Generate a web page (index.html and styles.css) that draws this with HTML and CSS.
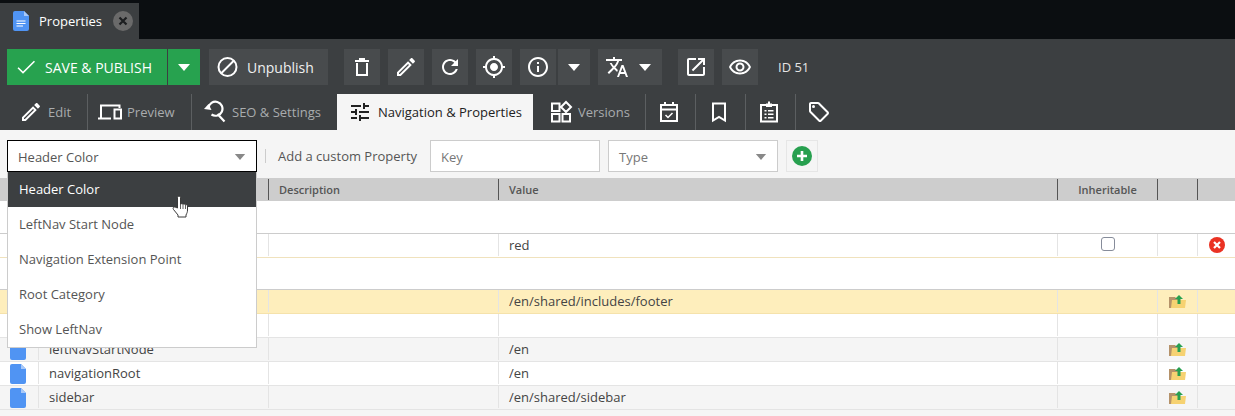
FILE: index.html
```html
<!DOCTYPE html>
<html lang="en">
<head>
    <meta charset="UTF-8">
    <title>Properties</title>
    <link rel="stylesheet" href="styles.css">
</head>
<body>
    <svg class="sprite" width="0" height="0">
        <defs>
            <symbol id="doc" viewBox="0 0 16 20"><path fill="#5094f3" d="M2 0h9l5 5v13a2 2 0 0 1-2 2H2a2 2 0 0 1-2-2V2a2 2 0 0 1 2-2z"/><path fill="#a9c9f8" d="M11 0l5 5h-5z"/></symbol>
            <symbol id="folder" viewBox="0 0 17 13"><path fill="#b5926a" d="M0 2h6l1 1h3v8l-8 2H0z"/><path fill="#f6d272" d="M3 5h14l-1 8H2z"/><path fill="#27a050" d="M10 0l4 4h-2.500v5h-3V4H6z"/></symbol>
            <symbol id="caret" viewBox="0 0 12 7"><path d="M0 0h12L6 7z"/></symbol>
        </defs>
    </svg>

    <div class="topbar">
        <div class="doc-tab">
            <svg class="doc-tab-icon" viewBox="0 0 16 20"><path fill="#5094f3" d="M2 0h9l5 5v13a2 2 0 0 1-2 2H2a2 2 0 0 1-2-2V2a2 2 0 0 1 2-2z"/><path fill="#a9c9f8" d="M11 0l5 5h-5z"/><path fill="#fff" d="M3.500 9.500h9v1h-9zm0 2.500h9v1h-9zm0 2.500h6.500v1H3.500z"/></svg>
            <span class="doc-tab-title">Properties</span>
            <span class="doc-tab-close"><svg viewBox="0 0 10 10"><path d="M1.500 1.500l7 7m0-7l-7 7" stroke="#1c1e20" stroke-width="2.200"/></svg></span>
        </div>
    </div>

    <div class="toolbar">
        <button class="btn btn-save"><svg viewBox="0 0 24 24"><path d="M9 16.600L4.600 12.200l-1.100 1.100L9 18.800 21 6.800l-1.100-1.100z"/></svg>SAVE &amp; PUBLISH</button>
        <button class="btn btn-save-more"><svg class="caret"><use href="#caret"/></svg></button>
        <button class="btn btn-text btn-unpublish"><svg viewBox="0 0 24 24"><circle cx="11.500" cy="12" r="9" fill="none" stroke="#fff" stroke-width="2"/><path d="M5 18.500l13-13" stroke="#fff" stroke-width="2"/></svg>Unpublish</button>
        <button class="btn btn-icon btn-first"><svg viewBox="0 0 24 24"><path d="M9 3h6v2H9zM5 5h14v2H5z"/><path d="M7 8v12h10V8" fill="none" stroke="#fff" stroke-width="2"/></svg></button>
        <button class="btn btn-icon"><svg viewBox="0 0 24 24"><path d="M3 17.250V21h3.750L17.810 9.940l-3.750-3.750L3 17.250zM5.920 19H5v-.92l9.060-9.060.92.92L5.920 19zM20.710 7.040c.39-.39.39-1.020 0-1.410l-2.340-2.340c-.39-.39-1.020-.39-1.410 0l-1.830 1.830 3.750 3.750 1.830-1.830z"/></svg></button>
        <button class="btn btn-icon"><svg viewBox="0 0 24 24"><path d="M17.650 6.350C16.200 4.900 14.210 4 12 4c-4.420 0-7.990 3.580-7.990 8s3.570 8 7.990 8c3.730 0 6.840-2.550 7.730-6h-2.080c-.82 2.330-3.040 4-5.650 4-3.310 0-6-2.690-6-6s2.690-6 6-6c1.660 0 3.140.69 4.220 1.780L13 11h7V4l-2.350 2.350z"/></svg></button>
        <button class="btn btn-icon"><svg viewBox="0 0 24 24"><path d="M12 8c-2.210 0-4 1.790-4 4s1.790 4 4 4 4-1.790 4-4-1.790-4-4-4zm8.940 3c-.46-4.170-3.770-7.480-7.940-7.940V1h-2v2.060C6.830 3.520 3.520 6.830 3.060 11H1v2h2.060c.46 4.170 3.770 7.480 7.940 7.940V23h2v-2.060c4.170-.46 7.480-3.770 7.940-7.940H23v-2h-2.060zM12 19c-3.870 0-7-3.130-7-7s3.130-7 7-7 7 3.130 7 7-3.130 7-7 7z"/></svg></button>
        <button class="btn btn-icon"><svg viewBox="0 0 24 24"><path d="M11 7h2v2h-2zm0 4h2v6h-2zm1-9C6.480 2 2 6.480 2 12s4.480 10 10 10 10-4.480 10-10S17.520 2 12 2zm0 18c-4.410 0-8-3.590-8-8s3.590-8 8-8 8 3.590 8 8-3.590 8-8 8z"/></svg></button>
        <button class="btn btn-caret"><svg class="caret"><use href="#caret"/></svg></button>
        <button class="btn btn-translate"><svg viewBox="0 0 24 24"><path d="M12.870 15.070l-2.540-2.510.03-.03c1.740-1.940 2.980-4.170 3.710-6.530H17V4h-7V2H8v2H1v1.990h11.170C11.500 7.920 10.440 9.750 9 11.350 8.070 10.320 7.300 9.190 6.690 8h-2c.73 1.630 1.730 3.170 2.980 4.560l-5.090 5.020L4 19l5-5 3.110 3.110.76-2.040zM18.500 10h-2L12 22h2l1.120-3h4.750L21 22h2l-4.500-12zm-2.620 7l1.620-4.330L19.120 17h-3.240z"/></svg><svg class="caret"><use href="#caret"/></svg></button>
        <button class="btn btn-icon btn-group-start"><svg viewBox="0 0 24 24"><path d="M19 19H5V5h7V3H5c-1.110 0-2 .9-2 2v14c0 1.100.89 2 2 2h14c1.100 0 2-.9 2-2v-7h-2v7zM14 3v2h3.590l-9.830 9.830 1.410 1.410L19 6.410V10h2V3h-7z"/></svg></button>
        <button class="btn btn-icon"><svg viewBox="0 0 24 24"><path d="M12 6.500c3.790 0 7.170 2.130 8.820 5.500-1.650 3.370-5.020 5.500-8.820 5.500S4.830 15.370 3.180 12C4.830 8.630 8.210 6.500 12 6.500m0-2C7 4.500 2.730 7.610 1 12c1.730 4.390 6 7.500 11 7.500s9.270-3.110 11-7.500c-1.730-4.390-6-7.500-11-7.500zm0 5c1.380 0 2.500 1.120 2.500 2.500s-1.120 2.500-2.500 2.500-2.500-1.120-2.500-2.500 1.120-2.500 2.500-2.500m0-2c-2.480 0-4.500 2.020-4.500 4.500s2.020 4.500 4.500 4.500 4.500-2.020 4.500-4.500-2.020-4.500-4.500-4.500z"/></svg></button>
        <span class="doc-id">ID 51</span>
    </div>

    <div class="tabs">
        <a class="tab tab-edit"><svg viewBox="0 0 24 24"><path d="M3 17.250V21h3.750L17.810 9.940l-3.750-3.750L3 17.250zM5.920 19H5v-.92l9.060-9.060.92.92L5.920 19zM20.710 7.040c.39-.39.39-1.020 0-1.410l-2.340-2.340c-.39-.39-1.020-.39-1.410 0l-1.830 1.830 3.750 3.750 1.830-1.830z"/></svg>Edit</a>
        <a class="tab tab-preview"><svg viewBox="0 0 24 24"><path d="M3 18V5.500h18.500V8M0 18.500h13" fill="none" stroke="#fff" stroke-width="2"/><path d="M16.500 9.500H23v9h-6.500z" fill="none" stroke="#fff" stroke-width="2"/></svg>Preview</a>
        <a class="tab tab-seo"><svg viewBox="0 0 24 24"><path d="M5.500 8a7 7 0 1 1 3 6.500M14.500 14l7 7.500" fill="none" stroke="#fff" stroke-width="2.200"/><path d="M1 9l4.500-5 3 6z"/></svg>SEO &amp; Settings</a>
        <a class="tab tab-active"><svg viewBox="0 0 24 24"><path d="M3 17v2h6v-2H3zM3 5v2h10V5H3zm10 16v-2h8v-2h-8v-2h-2v6h2zM7 9v2H3v2h4v2h2V9H7zm14 4v-2H11v2h10zm-6-4h2V7h4V5h-4V3h-2v6z"/></svg>Navigation &amp; Properties</a>
        <a class="tab tab-versions"><svg viewBox="0 0 24 24"><path d="M3 3.500h7.500V11H3zM3 14h7.500v7.500H3zM13.500 14H21v7.500h-7.500zM17 2l5 5-5 5-5-5z" fill="none" stroke="#fff" stroke-width="2"/></svg>Versions</a>
        <a class="tab tab-only"><svg viewBox="0 0 24 24"><path d="M4 5h16v16H4zM4 9.500h16M8 2v4M16 2v4" fill="none" stroke="#fff" stroke-width="2"/><path d="M8.500 15l2.500 2.500 4.500-4.500" fill="none" stroke="#fff" stroke-width="1.500"/></svg></a>
        <a class="tab tab-only"><svg viewBox="0 0 24 24"><path d="M6 3.500h12v17l-6-3.500-6 3.500z" fill="none" stroke="#fff" stroke-width="2"/></svg></a>
        <a class="tab tab-only"><svg viewBox="0 0 24 24"><path d="M4 5h16v16.500H4z" fill="none" stroke="#fff" stroke-width="2"/><path d="M9 3.500h6v3.500H9zM11 1.500h2v2h-2zM7.500 10h2v1.500h-2zM11 10h5.500v1.500H11zM7.500 13.500h2V15h-2zM11 13.500h5.500V15H11zM7.500 17h2v1.500h-2zM11 17h5.500v1.500H11z"/></svg></a>
        <a class="tab tab-only tab-last"><svg viewBox="0 0 24 24"><path d="M21.410 11.580l-9-9C12.050 2.220 11.550 2 11 2H4c-1.100 0-2 .9-2 2v7c0 .55.22 1.050.59 1.420l9 9c.36.36.86.58 1.410.58s1.050-.22 1.410-.59l7-7c.37-.36.59-.86.59-1.410s-.23-1.060-.59-1.420zM13 20.010L4 11V4h7v-.01l9 9-7 7.020z"/><circle cx="6.500" cy="6.500" r="1.500"/></svg></a>
    </div>

    <div class="content">
        <div class="filter-bar">
            <div class="select select-open">Header Color<svg class="caret"><use href="#caret"/></svg>
                <ul class="select-list">
                    <li class="selected">Header Color</li>
                    <li>LeftNav Start Node</li>
                    <li>Navigation Extension Point</li>
                    <li>Root Category</li>
                    <li>Show LeftNav</li>
                </ul>
                <svg class="hand" viewBox="0 0 17 23"><path d="M5.500 13V2.500a1.500 1.500 0 0 1 3 0V9l1.300-.3 1 .4 1.500-.1 1 .6 1.200.1 1 1V15c0 2-.5 3-1.500 5v2H6v-2l-4.500-5.500C.5 13 1.500 11.500 3 12z" fill="#fff" stroke="#3a3a3a" stroke-width="1"/><path d="M8.500 9v5M11 9.500V14M13.500 10v4" stroke="#3a3a3a" stroke-width=".8"/></svg>
            </div>
            <span class="filter-sep"></span>
            <span class="filter-label">Add a custom Property</span>
            <div class="field field-key">Key</div>
            <div class="field field-type">Type<svg class="caret"><use href="#caret"/></svg></div>
            <button class="btn-add"><svg viewBox="0 0 20 20"><circle cx="10" cy="10" r="10" fill="#27a04f"/><path d="M10 5v10M5 10h10" stroke="#fff" stroke-width="2.600"/></svg></button>
        </div>

        <div class="grid-head">
            <div class="cell"></div>
            <div class="cell"></div>
            <div class="cell">Description</div>
            <div class="cell">Value</div>
            <div class="cell cell-center">Inheritable</div>
            <div class="cell"></div>
            <div class="cell cell-end"></div>
        </div>
        <div class="group-row group-first"></div>
        <div class="row row-first">
            <div class="cell"></div>
            <div class="cell"></div>
            <div class="cell"></div>
            <div class="cell">red</div>
            <div class="cell cell-center"><input class="check" type="checkbox"></div>
            <div class="cell"></div>
            <div class="cell cell-center cell-end"><svg class="icon-remove" viewBox="0 0 16 16"><circle cx="8" cy="8" r="8" fill="#ea3223"/><path d="M5 5l6 6m0-6l-6 6" stroke="#fff" stroke-width="2.200"/></svg></div>
        </div>
        <div class="group-row"></div>
        <div class="row row-highlight">
            <div class="cell"></div>
            <div class="cell"></div>
            <div class="cell"></div>
            <div class="cell">/en/shared/includes/footer</div>
            <div class="cell"></div>
            <div class="cell cell-center"><svg class="icon-folder"><use href="#folder"/></svg></div>
            <div class="cell cell-end"></div>
        </div>
        <div class="row">
            <div class="cell"></div>
            <div class="cell"></div>
            <div class="cell"></div>
            <div class="cell"></div>
            <div class="cell"></div>
            <div class="cell"></div>
            <div class="cell cell-end"></div>
        </div>
        <div class="row row-alt">
            <div class="cell cell-doc"><svg class="icon-doc"><use href="#doc"/></svg></div>
            <div class="cell">leftNavStartNode</div>
            <div class="cell"></div>
            <div class="cell">/en</div>
            <div class="cell"></div>
            <div class="cell cell-center"><svg class="icon-folder"><use href="#folder"/></svg></div>
            <div class="cell cell-end"></div>
        </div>
        <div class="row">
            <div class="cell cell-doc"><svg class="icon-doc"><use href="#doc"/></svg></div>
            <div class="cell">navigationRoot</div>
            <div class="cell"></div>
            <div class="cell">/en</div>
            <div class="cell"></div>
            <div class="cell cell-center"><svg class="icon-folder"><use href="#folder"/></svg></div>
            <div class="cell cell-end"></div>
        </div>
        <div class="row row-alt">
            <div class="cell cell-doc"><svg class="icon-doc"><use href="#doc"/></svg></div>
            <div class="cell">sidebar</div>
            <div class="cell"></div>
            <div class="cell">/en/shared/sidebar</div>
            <div class="cell"></div>
            <div class="cell cell-center"><svg class="icon-folder"><use href="#folder"/></svg></div>
            <div class="cell cell-end"></div>
        </div>
    </div>
</body>
</html>
```

FILE: styles.css
```css
* {
    box-sizing: border-box;
}
body {
    margin: 0;
    height: 416px;
    overflow: hidden;
    font-family: "Open Sans", sans-serif;
    font-size: 13px;
    color: #444;
    background: #f5f5f5;
}
.sprite {
    position: absolute;
}
button {
    font-family: inherit;
    border: none;
    padding: 0;
}
svg {
    fill: #fff;
    flex: none;
}

/* Top document tabs */
.topbar {
    height: 39px;
    padding-top: 3px;
    background: #0b0e11;
}
.doc-tab {
    display: flex;
    align-items: center;
    width: 139px;
    height: 36px;
    padding-left: 13px;
    background: #3c3f41;
    color: #fff;
    font-size: 13px;
}
.doc-tab-icon {
    width: 16px;
    height: 20px;
    margin-right: 10px;
}
.doc-tab-title {
    width: 74px;
}
.doc-tab-close {
    display: flex;
    align-items: center;
    justify-content: center;
    width: 20px;
    height: 20px;
    border-radius: 50%;
    background: #6a6a6a;
}
.doc-tab-close svg {
    width: 10px;
    height: 10px;
}

/* Toolbar */
.toolbar {
    display: flex;
    align-items: center;
    height: 55px;
    padding: 10px 0 9px 7px;
    background: #3c3f41;
}
.btn {
    display: flex;
    align-items: center;
    height: 36px;
    background: #484b4d;
    color: #f0f0f0;
    font-size: 14px;
}
.btn svg {
    width: 24px;
    height: 24px;
}
.btn .caret {
    width: 12px;
    height: 7px;
}
.btn-save {
    width: 160px;
    padding-left: 7px;
    gap: 7px;
    background: #27a24f;
    color: #fff;
    font-size: 14px;
}
.btn-save-more {
    justify-content: center;
    width: 32px;
    margin-left: 1px;
    background: #27a24f;
    margin-right: 9px;
}
.btn-unpublish {
    width: 119px;
    padding-left: 7px;
    gap: 7px;
    margin-right: 16px;
}
.btn-icon {
    justify-content: center;
    width: 36px;
    margin-right: 8px;
}
.btn-caret {
    justify-content: center;
    width: 32px;
    margin-left: -6px;
    margin-right: 8px;
}
.btn-translate {
    width: 64px;
    padding-left: 7px;
    gap: 10px;
    margin-right: 16px;
}
.doc-id {
    margin-left: 12px;
    color: #e4e4e4;
    font-size: 13px;
}

/* Section tabs */
.tabs {
    display: flex;
    height: 36px;
    background: #3c3f41;
}
.tab {
    display: flex;
    align-items: center;
    gap: 5px;
    color: #a9acae;
    border-right: 1px solid #5c5f61;
}
.tab svg {
    width: 24px;
    height: 24px;
}
.tab-edit {
    width: 88px;
    padding-left: 19px;
}
.tab-preview {
    width: 104px;
    padding-left: 10px;
}
.tab-seo {
    width: 145px;
    padding-left: 11px;
    border-right: none;
}
.tab-active {
    width: 196px;
    padding-left: 11px;
    gap: 6px;
    background: #f5f5f5;
    color: #222;
    border-right: none;
}
.tab-active svg {
    fill: #222;
}
.tab-versions {
    width: 113px;
    padding-left: 16px;
}
.tab-only {
    justify-content: center;
    width: 50px;
    padding-right: 4px;
}
.tab-last {
    border-right: none;
}

/* Add property bar */
.filter-bar {
    display: flex;
    align-items: center;
    height: 48px;
    padding: 4px 0 0 7px;
}
.select, .field {
    position: relative;
    display: flex;
    align-items: center;
    height: 32px;
    padding: 2px 0 0 10px;
    background: #fff;
    border: 1px solid #ccc;
    color: #777;
}
.select-open {
    width: 250px;
    border-color: #000;
    color: #555;
}
.select .caret, .field .caret {
    position: absolute;
    right: 10px;
    top: 13px;
    width: 12px;
    height: 6px;
    fill: #888;
}
.select-list {
    position: absolute;
    left: -1px;
    top: 31px;
    width: 250px;
    margin: 0;
    padding: 0;
    list-style: none;
    background: #fff;
    border: 1px solid #ccc;
    border-top: none;
    z-index: 5;
}
.select-list li {
    height: 35px;
    line-height: 34px;
    padding-left: 11px;
    color: #555;
}
.select-list li.selected {
    background: #3c3f41;
    color: #fff;
}
.hand {
    position: absolute;
    left: 164px;
    top: 54px;
    width: 17px;
    height: 23px;
    z-index: 6;
}
.filter-sep {
    width: 1px;
    height: 14px;
    margin: 0 12px 0 8px;
    background: #ccc;
}
.filter-label {
    width: 152px;
    color: #555;
}
.field-key {
    width: 170px;
    margin-right: 8px;
}
.field-type {
    width: 170px;
    margin-right: 8px;
}
.btn-add {
    display: flex;
    align-items: center;
    justify-content: center;
    width: 32px;
    height: 32px;
    background: #f5f5f5;
    border: 1px solid #e6e6e6;
}
.btn-add svg {
    width: 20px;
    height: 20px;
}

/* Properties grid */
.grid-head, .row {
    display: grid;
    grid-template-columns: 39px 230px 230px 559px 100px 40px 1fr;
}
.grid-head {
    height: 23px;
    padding: 1px 0;
    background: #cdcdcd;
    font-size: 11px;
    font-weight: 600;
    color: #555;
}
.cell {
    display: flex;
    align-items: center;
    padding-left: 10px;
    border-right: 1px solid #e4e4e4;
}
.grid-head .cell {
    border-right-color: #555;
}
.cell-center {
    justify-content: center;
    padding-left: 0;
}
.cell-end {
    border-right: none;
}
.group-row {
    height: 32px;
    background: #fff;
    border-bottom: 1px solid #ccc;
}
.group-first {
    height: 33px;
}
.row {
    height: 24px;
    padding-bottom: 1px;
    background: #fff;
    border-bottom: 1px solid #e4e4e4;
    color: #444;
}
.row-first {
    border-bottom-color: #f0e2bd;
}
.row-highlight {
    background: #feeebc;
    border-bottom-color: #f5e2ab;
}
.row-alt {
    background: #f5f5f5;
}
.check {
    appearance: none;
    width: 14px;
    height: 14px;
    margin: 0 0 2px;
    background: #fff;
    border: 1px solid #868c9a;
    border-radius: 3px;
}
.icon-remove {
    width: 16px;
    height: 16px;
}
.icon-folder {
    width: 17px;
    height: 13px;
}
.icon-doc {
    width: 16px;
    height: 20px;
    margin-top: 2px;
}
```
